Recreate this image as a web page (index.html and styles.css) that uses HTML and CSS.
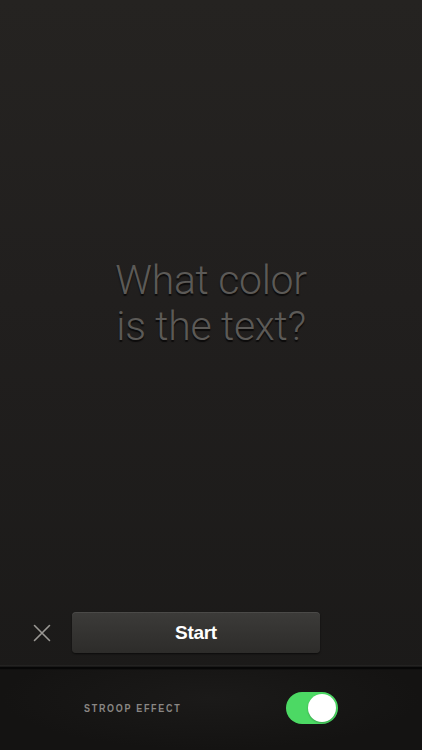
FILE: index.html
```html
<!DOCTYPE html>
<html>
<head>
<meta charset="utf-8">
<link rel="stylesheet" href="styles.css">
</head>
<body>
<div class="screen">
  <main class="stage">
    <h1 class="question">What color<br>is the text?</h1>
  </main>
  <div class="actions">
    <button class="close" aria-label="Close">
      <svg width="18" height="18" viewBox="0 0 18 18"><path d="M1.5 1.5 L16.5 16.5 M16.5 1.5 L1.5 16.5" stroke="#9a9894" stroke-width="1.6" stroke-linecap="round" fill="none"/></svg>
    </button>
    <button class="start">Start</button>
  </div>
  <div class="divider"></div>
  <footer class="settings">
    <span class="label-box"><span class="label">STROOP EFFECT</span></span>
    <span class="toggle"><span class="knob"></span></span>
  </footer>
</div>
</body>
</html>
```
FILE: styles.css
```css
html, body {
  margin: 0;
  padding: 0;
  background: #1a1918;
}
.screen {
  width: 422px;
  height: 750px;
  display: flex;
  flex-direction: column;
  font-family: "Liberation Sans", Arial, sans-serif;
  background: linear-gradient(#252321 0%, #211f1e 40%, #1a1918 100%);
  overflow: hidden;
}
.stage {
  height: 612px;
  display: flex;
  align-items: center;
  justify-content: center;
}
.question {
  margin: 0 0 6px 0;
  font-family: Roboto, "Liberation Sans", sans-serif;
  font-weight: 300;
  font-size: 41px;
  line-height: 46px;
  text-align: center;
  color: #5c5a57;
  text-shadow: 0 2px 1px #0c0b0b;
  letter-spacing: -0.3px;
}
.actions {
  height: 41px;
  display: flex;
  align-items: center;
  padding-left: 33px;
  gap: 21px;
}
.close {
  width: 18px;
  height: 18px;
  padding: 0;
  border: 0;
  background: none;
  display: flex;
}
.start {
  width: 248px;
  height: 41px;
  border: 0;
  border-radius: 4px;
  background: linear-gradient(#3c3b39, #2d2c2a);
  box-shadow: inset 0 1px 0 rgba(255,255,255,0.08), 0 1px 2px rgba(0,0,0,0.6);
  color: #ffffff;
  font-family: "Liberation Sans", Arial, sans-serif;
  font-weight: bold;
  font-size: 19px;
  letter-spacing: -0.3px;
  padding: 0;
}
.divider {
  margin-top: 12px;
  height: 5px;
  background: linear-gradient(#1b1a19 0, #2c2b2a 1px, #070707 2px, #070707 4px, #1a1918 5px);
}
.settings {
  flex: 1;
  display: flex;
  align-items: center;
  padding-left: 84px;
  padding-bottom: 4px;
  background: radial-gradient(ellipse at 50% 35%, #1b1a19 0%, #141312 70%);
}
.label-box {
  width: 202px;
  display: flex;
}
.label {
  display: inline-block;
  font-family: "Liberation Sans", Arial, sans-serif;
  font-size: 11.5px;
  font-weight: bold;
  letter-spacing: 2.2px;
  color: #8a8784;
  transform: scaleX(0.78);
  transform-origin: left center;
  white-space: nowrap;
}
.toggle {
  width: 52px;
  height: 32px;
  border-radius: 16px;
  background: #4cd964;
  display: flex;
  align-items: center;
  justify-content: flex-end;
  padding: 0 2px;
  box-sizing: border-box;
}
.knob {
  width: 28px;
  height: 28px;
  border-radius: 50%;
  background: #ffffff;
  box-shadow: 0 1px 2px rgba(0,0,0,0.25);
}
```
